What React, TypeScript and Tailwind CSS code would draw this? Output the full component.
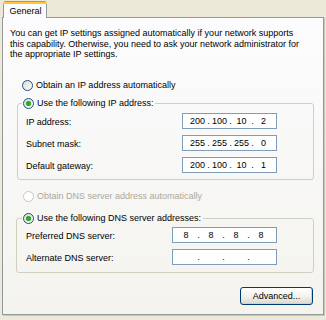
import React from 'react';

const Radio: React.FC<{ checked?: boolean; disabled?: boolean }> = ({ checked, disabled }) => (
    <span
        className={
            disabled
                ? 'flex h-[11px] w-[11px] shrink-0 items-center justify-center rounded-full border border-[#cac8bb] bg-white'
                : 'flex h-[11px] w-[11px] shrink-0 items-center justify-center rounded-full border border-[#1c5180] bg-linear-to-br from-[#dcd9ce] to-white'
        }
    >
        {checked && <span className="h-[5px] w-[5px] rounded-full bg-[#2aa82a] shadow-[0_0_1px_#6fd06f]" />}
    </span>
);

const IpBox: React.FC<{ parts: string[]; wide?: boolean }> = ({ parts, wide }) => (
    <div
        className={
            wide
                ? 'flex h-[16px] w-[105px] items-center border border-[#7f9db9] bg-white pl-[2px]'
                : 'flex h-[16px] w-[95px] items-center border border-[#7f9db9] bg-white pl-[5px]'
        }
    >
        {parts.map((p, i) => (
            <React.Fragment key={i}>
                <span className={wide ? 'w-[22px] text-center' : 'w-[19px] text-center'}>{p}</span>
                {i < 3 && <span className="w-[3px] text-center">.</span>}
            </React.Fragment>
        ))}
    </div>
);

const Row: React.FC<{ label: string; children: React.ReactNode }> = ({ label, children }) => (
    <div className="flex h-[16px] items-center justify-between">
        <span className="pt-[2px]">{label}</span>
        {children}
    </div>
);

export default function App() {
    return (
        <div className="h-[320px] w-[326px] overflow-hidden bg-[#ece9d8] px-[2px] font-['Liberation_Sans',Arial,sans-serif] text-[9px] leading-[11px] text-black">
            {/* tab strip */}
            <div className="flex pl-[1px] pt-[1px]">
                <div className="relative z-10 -mb-[1px] flex h-[17px] w-[44px] flex-col overflow-hidden rounded-t-[3px]">
                    <div className="h-[1px] bg-[#e68b2c]" />
                    <div className="h-[2px] bg-[#ffc83c]" />
                    <div className="flex flex-1 items-center justify-center border-x border-[#919b9c] bg-[#fcfcfe] pl-[1px]">
                        General
                    </div>
                </div>
            </div>

            {/* page */}
            <div className="flex h-[298px] flex-col border border-[#919b9c] bg-linear-to-b from-[#fcfcfe] to-[#f4f3ee] shadow-[1px_1px_0_#c9c7ba]">
                <p className="ml-[7px] mr-[4px] mt-[10px] leading-[10.7px]">
                    You can get IP settings assigned automatically if your network supports
                    <br />
                    this capability. Otherwise, you need to ask your network administrator for
                    <br />
                    the appropriate IP settings.
                </p>

                <div className="ml-[19px] mt-[20px] flex h-[11px] items-center gap-[3px]">
                    <Radio />
                    <span>Obtain an IP address automatically</span>
                </div>

                <fieldset className="ml-[14px] mr-[9px] mt-[7px] rounded-[3px] border border-[#d0d0bf]">
                    <legend className="ml-[4px] flex h-[11px] items-center gap-[3px] px-[1px]">
                        <Radio checked />
                        <span className="pr-[1px]">Use the following IP address:</span>
                    </legend>
                    <div className="flex flex-col gap-[6px] pb-[6px] pl-[8px] pr-[36px] pt-[4px]">
                        <Row label="IP address:">
                            <IpBox parts={['200', '100', '10', '2']} />
                        </Row>
                        <Row label="Subnet mask:">
                            <IpBox parts={['255', '255', '255', '0']} />
                        </Row>
                        <Row label="Default gateway:">
                            <IpBox parts={['200', '100', '10', '1']} />
                        </Row>
                    </div>
                </fieldset>

                <div className="ml-[20px] mt-[11px] flex h-[11px] items-center gap-[3px] text-[#aca899]">
                    <Radio disabled />
                    <span>Obtain DNS server address automatically</span>
                </div>

                <fieldset className="ml-[13px] mr-[9px] mt-[11px] rounded-[3px] border border-[#d0d0bf]">
                    <legend className="ml-[5px] flex h-[11px] items-center gap-[3px] px-[1px]">
                        <Radio checked />
                        <span className="pr-[1px]">Use the following DNS server addresses:</span>
                    </legend>
                    <div className="flex flex-col gap-[6px] pb-[7px] pl-[9px] pr-[36px] pt-[3px]">
                        <Row label="Preferred DNS server:">
                            <IpBox wide parts={['8', '8', '8', '8']} />
                        </Row>
                        <Row label="Alternate DNS server:">
                            <IpBox wide parts={['', '', '', '']} />
                        </Row>
                    </div>
                </fieldset>

                <div className="mt-[14px] flex justify-end pr-[10px]">
                    <button className="flex h-[18px] w-[73px] items-center justify-center rounded-[3px] border border-[#003c74] bg-linear-to-b from-white via-[#f4f3ee] to-[#dcd8cc] shadow-[inset_-1px_-1px_0_#d6d0c5]">
                        Advanced...
                    </button>
                </div>
            </div>
        </div>
    );
}
